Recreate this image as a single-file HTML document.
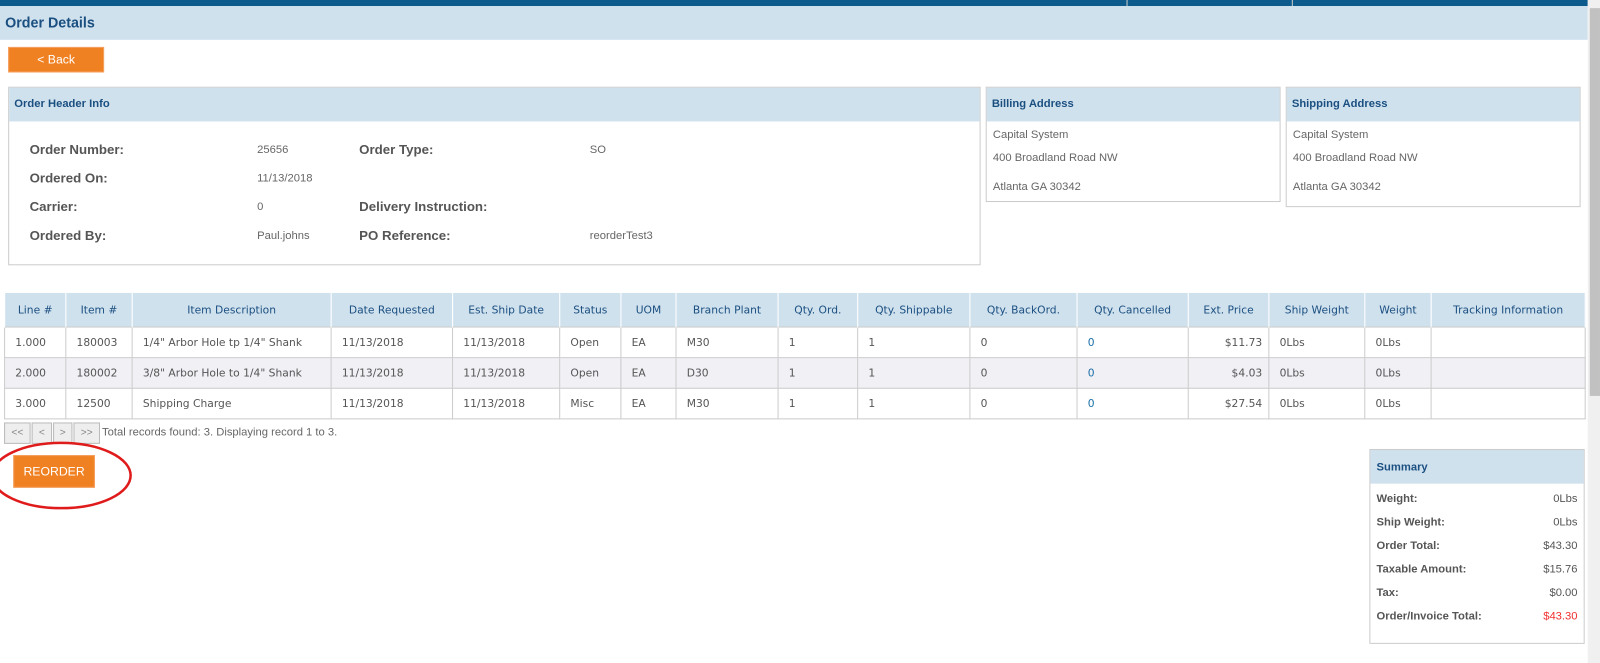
<!DOCTYPE html>
<html><head><style>
*{box-sizing:border-box;margin:0;padding:0}
body{width:1600px;height:650px;background:#fff;font-family:"Liberation Sans",Arial,sans-serif;overflow:hidden;color:#555}
#w{position:relative;width:1568px;height:640px;transform:scale(1.0204);transform-origin:0 0}
.a{position:absolute}
.topbar{left:0;top:0;width:1556px;height:6px;background:#0d5a8c}
.title{left:0;top:6px;width:1556px;height:33px;background:#d0e1ee;color:#1a4f80;font-weight:bold;font-size:14px;padding:8px 5px}
.btn{background:#f08122;color:#fff;font-size:12px;text-align:center;border:1px solid #f5a060}
.box{border:1px solid #ccc;background:#fff}
.bh{background:#d0e1ee;height:33px;color:#1a4f80;font-weight:bold;font-size:11px;padding:10px 5px}
.lbl{font-weight:bold;font-size:13px;color:#555}
.val{font-size:11px;color:#666}
table{border-collapse:collapse;position:absolute;left:4px;top:286px;font-family:"DejaVu Sans",sans-serif;font-size:10.5px;table-layout:fixed}
th{background:#d0e1ee;color:#1a4f80;font-weight:normal;height:34px;border:1px solid #fff;border-bottom:none}
td{height:30px;border:1px solid #ccc;padding-left:10px;color:#555;white-space:nowrap}
tr.g td{background:#f0f0f5}
.sum div{display:flex;justify-content:space-between;font-size:11px;padding:0 6px;height:23px;align-items:center}
.sum b{color:#555}
.pg{top:414px;height:21px;border:1px solid #bbb;background:#eee;font-size:10px;color:#888;text-align:center;line-height:19px}
</style></head><body><div id="w">
<div class="a topbar"></div>
<div class="a" style="left:1104px;top:0;width:1px;height:6px;background:#ccc"></div>
<div class="a" style="left:1266px;top:0;width:1px;height:6px;background:#ccc"></div>
<div class="a title">Order Details</div>
<div class="a" style="left:1556px;top:0;width:14px;height:650px;background:#f0f0f0"></div>
<div class="a" style="left:1558px;top:8px;width:10px;height:380px;background:#c1c1c1"></div>
<div class="a btn" style="left:8px;top:46px;width:94px;height:25px;line-height:23px">&lt; Back</div>

<div class="a box" style="left:8px;top:85px;width:953px;height:175px">
<div class="bh">Order Header Info</div>
<div class="a lbl" style="left:20px;top:53px">Order Number:</div><div class="a val" style="left:243px;top:55px">25656</div>
<div class="a lbl" style="left:20px;top:81px">Ordered On:</div><div class="a val" style="left:243px;top:83px">11/13/2018</div>
<div class="a lbl" style="left:20px;top:109px">Carrier:</div><div class="a val" style="left:243px;top:111px">0</div>
<div class="a lbl" style="left:20px;top:137px">Ordered By:</div><div class="a val" style="left:243px;top:139px">Paul.johns</div>
<div class="a lbl" style="left:343px;top:53px">Order Type:</div><div class="a val" style="left:569px;top:55px">SO</div>
<div class="a lbl" style="left:343px;top:109px">Delivery Instruction:</div>
<div class="a lbl" style="left:343px;top:137px">PO Reference:</div><div class="a val" style="left:569px;top:139px">reorderTest3</div>
</div>

<div class="a box" style="left:966px;top:85px;width:289px;height:113px">
<div class="bh">Billing Address</div>
<div class="a val" style="left:6px;top:40px">Capital System</div>
<div class="a val" style="left:6px;top:63px">400 Broadland Road NW</div>
<div class="a val" style="left:6px;top:91px">Atlanta GA 30342</div>
</div>
<div class="a box" style="left:1260px;top:85px;width:289px;height:118px">
<div class="bh">Shipping Address</div>
<div class="a val" style="left:6px;top:40px">Capital System</div>
<div class="a val" style="left:6px;top:63px">400 Broadland Road NW</div>
<div class="a val" style="left:6px;top:91px">Atlanta GA 30342</div>
</div>

<table style="width:1549px">
<colgroup><col style="width:60px"><col style="width:65px"><col style="width:195px"><col style="width:119px"><col style="width:105px"><col style="width:60px"><col style="width:54px"><col style="width:100px"><col style="width:78px"><col style="width:110px"><col style="width:105px"><col style="width:109px"><col style="width:79px"><col style="width:94px"><col style="width:65px"><col style="width:151px"></colgroup>
<tr><th>Line #</th><th>Item #</th><th>Item Description</th><th>Date Requested</th><th>Est. Ship Date</th><th>Status</th><th>UOM</th><th>Branch Plant</th><th>Qty. Ord.</th><th>Qty. Shippable</th><th>Qty. BackOrd.</th><th>Qty. Cancelled</th><th>Ext. Price</th><th>Ship Weight</th><th>Weight</th><th>Tracking Information</th></tr>
<tr><td>1.000</td><td>180003</td><td>1/4" Arbor Hole tp 1/4" Shank</td><td>11/13/2018</td><td>11/13/2018</td><td>Open</td><td>EA</td><td>M30</td><td>1</td><td>1</td><td>0</td><td style="color:#1a6fa8">0</td><td style="text-align:right;padding-right:6px">$11.73</td><td>0Lbs</td><td>0Lbs</td><td></td></tr>
<tr class="g"><td>2.000</td><td>180002</td><td>3/8" Arbor Hole to 1/4" Shank</td><td>11/13/2018</td><td>11/13/2018</td><td>Open</td><td>EA</td><td>D30</td><td>1</td><td>1</td><td>0</td><td style="color:#1a6fa8">0</td><td style="text-align:right;padding-right:6px">$4.03</td><td>0Lbs</td><td>0Lbs</td><td></td></tr>
<tr><td>3.000</td><td>12500</td><td>Shipping Charge</td><td>11/13/2018</td><td>11/13/2018</td><td>Misc</td><td>EA</td><td>M30</td><td>1</td><td>1</td><td>0</td><td style="color:#1a6fa8">0</td><td style="text-align:right;padding-right:6px">$27.54</td><td>0Lbs</td><td>0Lbs</td><td></td></tr>
</table>

<div class="a pg" style="left:4px;width:26px">&lt;&lt;</div>
<div class="a pg" style="left:31px;width:20px">&lt;</div>
<div class="a pg" style="left:52px;width:19px">&gt;</div>
<div class="a pg" style="left:72px;width:26px">&gt;&gt;</div>
<div class="a" style="left:100px;top:418px;font-size:11px;color:#666">Total records found: 3. Displaying record 1 to 3.</div>

<div class="a btn" style="left:13px;top:446px;width:80px;height:32px;line-height:30px">REORDER</div>
<svg class="a" style="left:-10px;top:432px" width="145" height="72"><ellipse cx="70" cy="34" rx="68" ry="32" fill="none" stroke="#e01b1b" stroke-width="2.5"/></svg>

<div class="a box sum" style="left:1342px;top:440px;width:211px;height:191px">
<div class="bh" style="height:33px;display:block;padding:11px 6px">Summary</div>
<div style="margin-top:3px"><b>Weight:</b><span>0Lbs</span></div>
<div><b>Ship Weight:</b><span>0Lbs</span></div>
<div><b>Order Total:</b><span>$43.30</span></div>
<div><b>Taxable Amount:</b><span>$15.76</span></div>
<div><b>Tax:</b><span>$0.00</span></div>
<div><b>Order/Invoice Total:</b><span style="color:#f03030">$43.30</span></div>
</div>
</div></body></html>
